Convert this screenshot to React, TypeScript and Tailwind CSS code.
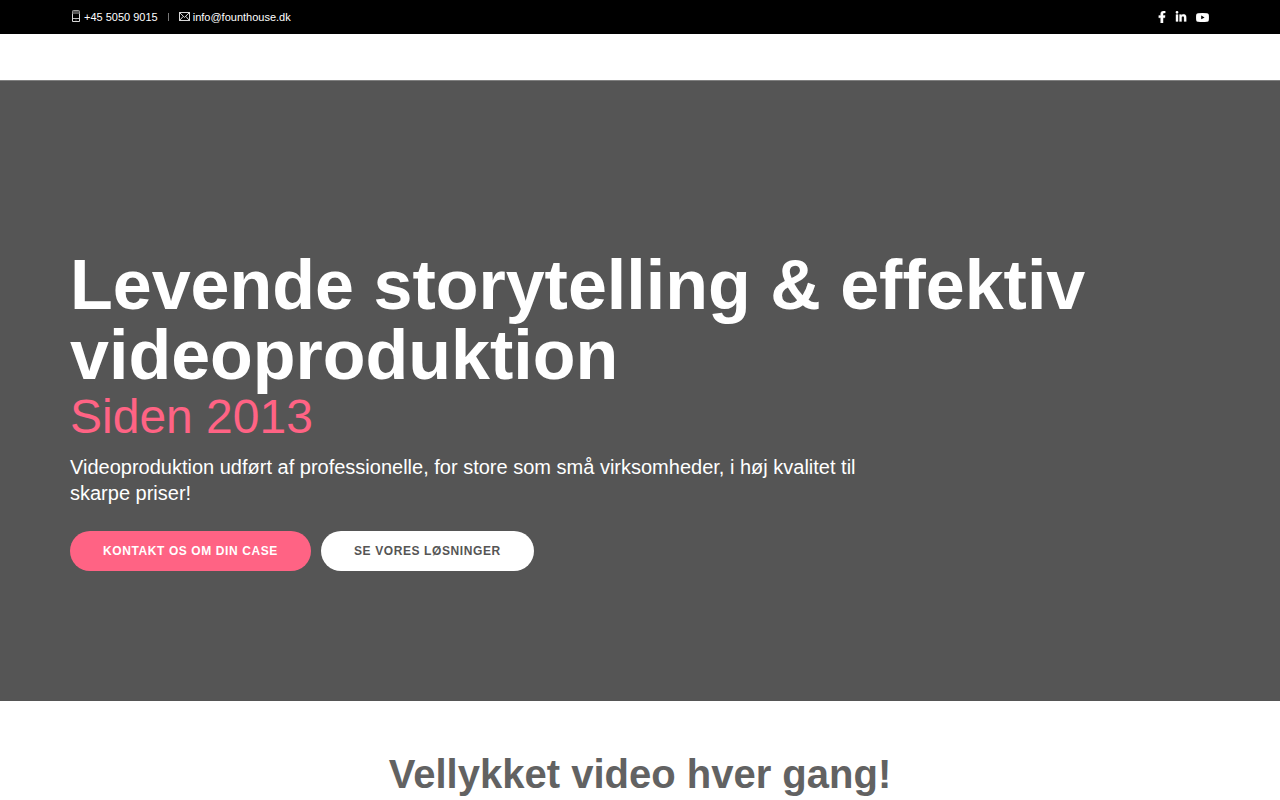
import { FaFacebookF, FaLinkedinIn } from "react-icons/fa";

function PhoneIcon() {
  return (
    <svg className="h-3 w-2" viewBox="0 0 8 12" fill="none" stroke="#d8d8d8" aria-hidden="true">
      <rect x="1" y="1" width="6" height="3" fill="#555555" stroke="none" />
      <path d="M0.5 4V11.5H7.5V4" />
      <path d="M0.5 4V1.2Q0.5 0.5 1.2 0.5H6.8Q7.5 0.5 7.5 1.2V4" stroke="#9a9a9a" />
      <path d="M1 8.5h6" stroke="#bdbdbd" />
      <path d="M4 9v2" opacity="0.3" />
    </svg>
  );
}

function EnvelopeIcon() {
  return (
    <svg className="h-[9px] w-[11px]" viewBox="0 0 11 9" fill="none" stroke="#d8d8d8" aria-hidden="true">
      <rect x="0.5" y="0.5" width="10" height="8" />
      <path d="M0.8 0.8 5.5 5.4 10.2 0.8M0.8 8.2 4.2 4.4M10.2 8.2 6.8 4.4" />
    </svg>
  );
}

function YoutubeIcon() {
  return (
    <svg className="h-[9px] w-[13px]" viewBox="0 0 13 9" fill="currentColor" aria-hidden="true">
      <path
        fillRule="evenodd"
        d="M2 0.2Q6.5-0.2 11 0.2Q12.6 0.3 12.8 1.8Q13.1 4.5 12.8 7.2Q12.6 8.7 11 8.8Q6.5 9.2 2 8.8Q0.4 8.7 0.2 7.2Q-0.1 4.5 0.2 1.8Q0.4 0.3 2 0.2ZM5.2 2.5V6.3L8.6 4.4Z"
      />
    </svg>
  );
}

const socials = [
  {
    label: "Facebook",
    href: "#facebook",
    icon: <FaFacebookF className="h-3 w-2" stroke="currentColor" strokeWidth={16} />,
  },
  {
    label: "LinkedIn",
    href: "#linkedin",
    icon: <FaLinkedinIn className="h-3 w-3" stroke="currentColor" strokeWidth={10} />,
  },
  { label: "YouTube", href: "#youtube", icon: <YoutubeIcon /> },
];

export default function App() {
  return (
    <div className="min-h-screen bg-white font-['Liberation_Sans',Arial,sans-serif]">
      <div className="bg-black text-white">
        <div className="mx-auto flex h-[34px] max-w-[1140px] items-center justify-between">
          <div className="flex items-center text-[11px] leading-4">
            <a href="tel:+4550509015" className="flex items-start gap-1 pl-0.5">
              <span className="pt-px">
                <PhoneIcon />
              </span>
              +45 5050 9015
            </a>
            <span className="mx-2.5 h-2 w-px bg-[#777777]" />
            <a href="mailto:info@founthouse.dk" className="flex items-start gap-[3px]">
              <span className="pt-[3px]">
                <EnvelopeIcon />
              </span>
              info@founthouse.dk
            </a>
          </div>
          <nav aria-label="Sociale medier" className="flex items-center gap-[9px] pr-px">
            {socials.map((s) => (
              <a key={s.label} href={s.href} aria-label={s.label}>
                {s.icon}
              </a>
            ))}
          </nav>
        </div>
      </div>
      <header className="h-[46px] bg-white" />
      <main>
        <section className="border-t border-[#808080] bg-[#555555] pt-[169px] pb-[130px]">
          <div className="mx-auto max-w-[1140px]">
            <h1 className="text-[70px] leading-[70px] font-bold text-white">
              Levende storytelling &amp; effektiv videoproduktion
            </h1>
            <p className="mt-[3px] text-5xl leading-[48px] text-[#ff6384]">Siden 2013</p>
            <p className="mt-[13px] max-w-[800px] text-xl leading-[26px] text-white">
              Videoproduktion udført af professionelle, for store som små virksomheder, i høj kvalitet til skarpe priser!
            </p>
            <div className="mt-[25px] flex gap-2.5">
              <a
                href="#kontakt"
                className="flex h-10 items-center rounded-full bg-[#ff6384] px-[33px] text-xs font-bold tracking-wider text-white uppercase"
              >
                Kontakt os om din case
              </a>
              <a
                href="#losninger"
                className="flex h-10 items-center rounded-full bg-white px-[33px] text-xs font-bold tracking-wider text-[#555555] uppercase"
              >
                Se vores løsninger
              </a>
            </div>
          </div>
        </section>
        <section className="px-4 pt-[50px]">
          <h2 className="text-center text-[40px] leading-[46px] font-bold text-[#626262]">Vellykket video hver gang!</h2>
        </section>
      </main>
    </div>
  );
}
